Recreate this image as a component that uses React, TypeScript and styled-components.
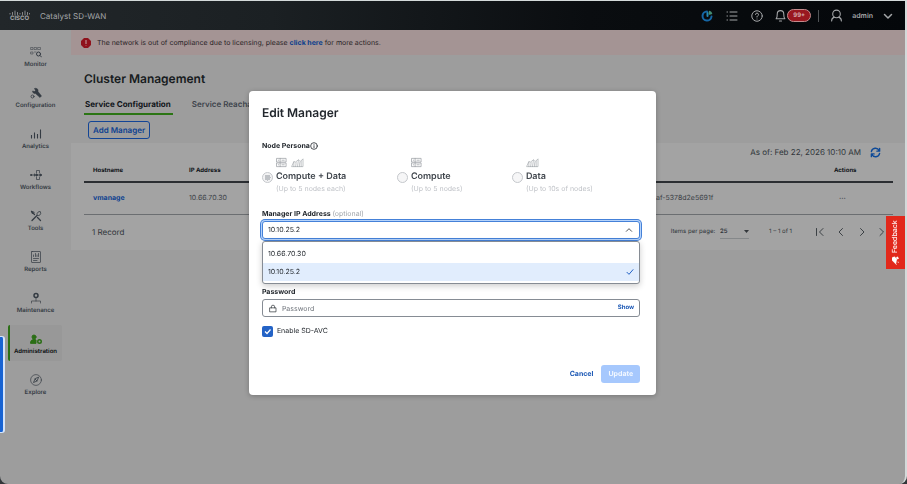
import React, { useState } from 'react';
import styled, { createGlobalStyle, css } from 'styled-components';

const GlobalStyle = createGlobalStyle`
  *, *::before, *::after { box-sizing: border-box; }
  html, body { margin: 0; height: 100%; background: #33373a; }
  body { font-family: Inter, "Liberation Sans", sans-serif; font-size: 7px; line-height: 12px; color: #23282e; text-rendering: geometricPrecision; }
  button, input, select { font: inherit; color: inherit; margin: 0; text-rendering: inherit; }
  button { cursor: pointer; }
`;

const Page = styled.div`
  min-height: 100vh;
  display: flex;
  flex-direction: column;
  background: #9d9d9d;
  border: solid #d4dada;
  border-width: 1px 2px 0 0;
  border-radius: 0 0 8px 8px;
  overflow: hidden;
`;

const TopBar = styled.header`
  height: 29px;
  flex: none;
  display: flex;
  align-items: center;
  justify-content: space-between;
  padding: 0 11px 0 9px;
  background: linear-gradient(90deg, #22272a 0%, #1b2023 30%, #0a0d10 65%, #04070a 100%);
  color: #a4a6a8;
`;

const Brand = styled.div`
  display: flex;
  align-items: center;
  gap: 10px;
  font-size: 8px;
`;

const Logo = styled.div`
  display: flex;
  flex-direction: column;
  align-items: center;
  width: 21px;
  font-size: 6px;
  line-height: 6px;
  font-weight: 700;
`;

const TopActions = styled.div`
  display: flex;
  align-items: center;
`;

const IconButton = styled.button<{ $width?: number }>`
  display: flex;
  align-items: center;
  justify-content: center;
  width: ${(p) => p.$width ?? 25}px;
  height: 20px;
  padding: 0;
  border: 0;
  background: none;
`;

const AlertButton = styled(IconButton)`
  width: 37px;
  margin-left: 5px;
`;

const CountBadge = styled.span`
  height: 13px;
  padding: 0 5px;
  border: 1px solid #c48b8d;
  border-radius: 7px;
  background: #991820;
  color: #d8b5b6;
  font-size: 6px;
  line-height: 11px;
  font-weight: 600;
`;

const Separator = styled.span`
  width: 1px;
  height: 12px;
  margin: 0 11px 0 7px;
  background: #505356;
`;

const UserButton = styled(IconButton)`
  width: auto;
  gap: 9px;
  font-weight: 600;
`;

const Body = styled.div`
  flex: 1;
  display: flex;
`;

const SideNav = styled.nav`
  flex: none;
  width: 71px;
  padding: 8px 9px 0 8px;
  display: flex;
  flex-direction: column;
  gap: 5px;
`;

const NavItem = styled.a<{ $active?: boolean }>`
  height: 36px;
  display: flex;
  flex-direction: column;
  align-items: center;
  gap: 2px;
  padding: 8px 1px 0 0;
  border-left: 2px solid transparent;
  border-radius: 2px;
  color: #343b43;
  font-size: 6px;
  line-height: 10px;
  font-weight: 600;
  text-decoration: none;
  ${(p) => p.$active && css`
    border-left-color: #2b6f16;
    background: #989898;
    color: #171b20;
    font-weight: 700;
    svg { color: #2b6f16; }
  `}
`;

const Main = styled.main`
  flex: 1;
  min-width: 0;
`;

const Banner = styled.div`
  height: 25px;
  display: flex;
  align-items: center;
  gap: 6px;
  padding-left: 10px;
  background: #a49494;
  color: #2b2527;
`;

const BannerLink = styled.a`
  color: #0c3f8c;
  font-weight: 700;
  text-decoration: none;
`;

const PageTitle = styled.h1`
  margin: 16px 0 0 13px;
  font-size: 12px;
  line-height: 16px;
  font-weight: 600;
  color: #171b20;
`;

const Tabs = styled.div`
  display: flex;
  gap: 18px;
  height: 21px;
  margin: 7px 0 0 13px;
`;

const Tab = styled.button<{ $active?: boolean }>`
  padding: 1px 2px 0 1px;
  border: 0;
  border-bottom: 2px solid ${(p) => (p.$active ? '#2b7514' : 'transparent')};
  background: none;
  font-size: 8px;
  font-weight: ${(p) => (p.$active ? 700 : 600)};
  color: ${(p) => (p.$active ? '#101419' : '#3d444c')};
`;

const AddButton = styled.button`
  display: block;
  height: 18px;
  margin: 6px 0 4px 17px;
  padding: 0 4px;
  border: 1px solid #134596;
  border-radius: 3px;
  background: none;
  color: #0e4190;
  font-size: 8px;
  font-weight: 600;
`;

const TablePanel = styled.section`
  padding: 0 12px 0 13px;
  background: #a3a3a3;
`;

const PanelHeader = styled.div`
  height: 18px;
  display: flex;
  align-items: center;
  justify-content: flex-end;
  gap: 8px;
  padding-right: 12px;
  font-size: 8px;
  color: #30353a;
`;

const NodeTable = styled.table`
  width: 100%;
  table-layout: fixed;
  border-collapse: collapse;
  text-align: left;
`;

const HeadCell = styled.th<{ $width?: number }>`
  width: ${(p) => (p.$width ? `${p.$width}px` : 'auto')};
  height: 21px;
  padding: 0 9px;
  border-bottom: 2px solid #2b2e32;
  font-size: 6px;
  font-weight: 700;
  color: #101419;
`;

const Cell = styled.td`
  height: 32px;
  padding: 0 9px;
  border-bottom: 1px solid #6b6e71;
  color: #3d4248;
`;

const HostLink = styled.a`
  color: #0e4190;
  font-weight: 700;
  text-decoration: none;
`;

const RowMenu = styled.button`
  padding: 0 5px;
  border: 0;
  background: none;
  font-size: 8px;
`;

const TableFooter = styled.div`
  height: 35px;
  display: flex;
  align-items: center;
  padding-left: 8px;
  color: #30353a;
`;

const RecordCount = styled.span`
  flex: 1;
  font-size: 8px;
`;

const PageSize = styled.label`
  display: flex;
  align-items: center;
  gap: 5px;
  font-size: 6px;
`;

const SizeSelectWrap = styled.span`
  display: flex;
  align-items: center;
  width: 29px;
  border-bottom: 1px solid #85888a;
`;

const SizeSelect = styled.select`
  flex: 1;
  min-width: 0;
  padding: 0;
  border: 0;
  appearance: none;
  background: none;
  font-weight: 600;
`;

const RangeText = styled.span`
  margin: 0 17px 0 20px;
  font-size: 6px;
`;

const FeedbackTab = styled.button`
  position: fixed;
  z-index: 3;
  right: 2px;
  top: 216px;
  width: 19px;
  height: 53px;
  display: flex;
  align-items: center;
  justify-content: center;
  gap: 3px;
  padding: 0;
  border: 0;
  writing-mode: vertical-rl;
  transform: rotate(180deg);
  background: #e2281b;
  color: #fff;
  font-size: 7px;
  font-weight: 500;
`;

const EdgeHandle = styled.span`
  position: fixed;
  z-index: 3;
  left: 0;
  top: 336px;
  width: 5px;
  height: 97px;
  border: solid #d5e4fa;
  border-width: 1px 2px 1px 0;
  border-radius: 0 3px 3px 0;
  background: #1763d3;
`;

const ModalLayer = styled.div`
  position: fixed;
  z-index: 2;
  inset: 2px 2px 0 0;
  display: flex;
  align-items: center;
  justify-content: center;
`;

const Dialog = styled.form`
  width: 45%;
  min-width: 407px;
  margin: 0;
  padding: 13px 16px 12px 13px;
  border-radius: 4px;
  background: #fff;
  box-shadow: 0 1px 5px rgba(0, 0, 0, 0.25);
`;

const DialogTitle = styled.h2`
  margin: 0;
  font-size: 12px;
  line-height: 18px;
  font-weight: 600;
`;

const FieldSet = styled.fieldset`
  margin: 18px 0 0;
  padding: 0;
  border: 0;
`;

const Legend = styled.legend`
  display: flex;
  align-items: center;
  padding: 0;
  font-weight: 700;
`;

const PersonaGrid = styled.div`
  display: grid;
  grid-template-columns: 135px 115px 1fr;
  padding-top: 4px;
`;

const PersonaOption = styled.label`
  display: grid;
  grid-template-columns: 10px 1fr;
  column-gap: 4px;
  align-items: center;
`;

const PersonaIcons = styled.span`
  grid-column: 2;
  display: flex;
  gap: 4px;
  height: 13px;
  align-items: center;
  color: #9a9ea3;
`;

const Radio = styled.input`
  appearance: none;
  width: 11px;
  height: 11px;
  border: 1px solid #c5c8cc;
  border-radius: 50%;
  background: #f6f6f7;
  &:checked { background: radial-gradient(circle, #bfc2c6 0 3px, #f3f3f4 3px); }
`;

const PersonaName = styled.span`
  line-height: 16px;
  font-size: 9px;
  font-weight: 600;
  color: #40464d;
`;

const PersonaHint = styled.span`
  grid-column: 2;
  line-height: 8px;
  color: #c0c3c8;
`;

const FieldLabel = styled.label`
  display: block;
  margin-top: 15px;
  font-weight: 700;
`;

const Optional = styled.span`
  font-weight: 400;
  color: #9fa4aa;
`;

const Combo = styled.div`
  position: relative;
  margin-top: 1px;
`;

const ComboBox = styled.div`
  display: flex;
  align-items: center;
  height: 18px;
  padding-right: 6px;
  border: 1px solid #4581d8;
  border-radius: 3px;
  background: #fff;
  box-shadow: 0 0 0 1px #b5d3fb, 0 0 0 2px #4581d8;
`;

const ComboSelect = styled.select`
  flex: 1;
  height: 16px;
  padding: 0 5px;
  border: 0;
  outline: 0;
  appearance: none;
  background: none;
`;

const Options = styled.ul`
  position: absolute;
  z-index: 1;
  top: 20px;
  left: 0;
  right: 0;
  margin: 0;
  padding: 3px 0 2px;
  border: 1px solid #868c94;
  border-radius: 3px;
  background: #fff;
  box-shadow: 0 2px 6px rgba(0, 0, 0, 0.2);
  list-style: none;
`;

const Option = styled.li<{ $selected?: boolean }>`
  display: flex;
  align-items: center;
  justify-content: space-between;
  height: 18px;
  padding: 0 5px;
  background: ${(p) => (p.$selected ? '#e1edfd' : 'transparent')};
`;

const PasswordLabel = styled(FieldLabel)`
  margin-top: 47px;
`;

const PasswordBox = styled.div`
  display: flex;
  align-items: center;
  gap: 5px;
  height: 18px;
  margin-top: 1px;
  padding: 0 5px 0 6px;
  border: 1px solid #868c94;
  border-radius: 3px;
`;

const PasswordInput = styled.input`
  flex: 1;
  min-width: 0;
  height: 16px;
  padding: 0;
  border: 0;
  outline: 0;
  background: none;
  &::placeholder { color: #71767d; opacity: 1; }
`;

const TextButton = styled.button`
  padding: 0;
  border: 0;
  background: none;
  color: #1c58b5;
  font-size: 6px;
  font-weight: 700;
`;

const CheckRow = styled.label`
  display: flex;
  align-items: center;
  gap: 4px;
  margin-top: 8px;
`;

const CheckBox = styled.input`
  appearance: none;
  width: 11px;
  height: 11px;
  border-radius: 2px;
  background: #2463c6;
`;

const CheckWrap = styled.span`
  position: relative;
  display: flex;
`;

const CheckMark = styled.svg`
  position: absolute;
  inset: 2px;
  pointer-events: none;
`;

const Buttons = styled.div`
  display: flex;
  justify-content: flex-end;
  align-items: center;
  gap: 8px;
  margin-top: 28px;
`;

const CancelButton = styled(TextButton)`
  font-size: 7px;
`;

const UpdateButton = styled.button`
  height: 18px;
  padding: 0 7px;
  border: 0;
  border-radius: 3px;
  background: #a6c8fd;
  color: #f3f8ff;
  font-weight: 700;
`;

type GlyphProps = { children: React.ReactNode; w?: number; h?: number; box?: string; sw?: number };
const Glyph = ({ children, w = 12, h = 12, box = '0 0 24 24', sw = 2 }: GlyphProps) => (
  <svg width={w} height={h} viewBox={box} fill="none" stroke="currentColor" strokeWidth={sw} strokeLinecap="round" strokeLinejoin="round" aria-hidden="true">
    {children}
  </svg>
);

const navItems: { label: string; icon: React.ReactNode }[] = [
  { label: 'Monitor', icon: <><path d="M2 3h4v4H2zM9 3h4v4H9zM16 3h5v4h-5zM2 12h4v4H2zM9 12h3" strokeWidth="1" /><circle cx="17" cy="16" r="4" /><path d="m20 19 3 3" /></> },
  { label: 'Configuration', icon: <><path d="M9 3a5 5 0 0 1 7 6l7 9-3 3-9-8a5 5 0 0 1-6-5l4 1 2-2z" fill="currentColor" strokeWidth="1" /><circle cx="5" cy="19" r="3" strokeWidth="1.6" /></> },
  { label: 'Analytics', icon: <path d="M3 21v-7M9 21V9M15 21V12M21 21V3" strokeWidth="2.2" strokeLinecap="butt" /> },
  { label: 'Workflows', icon: <><circle cx="2" cy="12" r="1" fill="currentColor" /><path d="M4 12h18M9 10v4" strokeWidth="1.6" /><path d="M13 8V3h6v5M13 16v5h6v-5" strokeWidth="1.4" /><circle cx="13" cy="12" r="1.6" fill="currentColor" /><circle cx="21" cy="12" r="1.6" fill="currentColor" /></> },
  { label: 'Tools', icon: <><path d="M4 21 14 11M3 3l6 6M15 15l6 6" strokeWidth="2.6" /><path d="M21 4a5 5 0 0 1-6 7M20 3a5 5 0 0 0-6 6M3 3l2 5 3-3z" strokeWidth="1.6" /></> },
  { label: 'Reports', icon: <><rect x="3" y="1" width="18" height="22" rx="1" strokeWidth="1.4" /><path d="M7 11V8M11 11V5M14 11V8M17 11V5M7 15h10M7 19h7" strokeWidth="1.4" /></> },
  { label: 'Maintenance', icon: <><circle cx="12" cy="7" r="4" strokeWidth="3" /><path d="M12 12v6M3 22v-4h18v4" strokeWidth="1.3" /></> },
  { label: 'Administration', icon: <><circle cx="8" cy="8" r="4" fill="currentColor" /><path d="M1 20c0-5 3-7 7-7 2 0 3 0 4 1v6z" fill="currentColor" /><circle cx="19" cy="17" r="3.5" strokeWidth="3" /></> },
  { label: 'Explore', icon: <><circle cx="12" cy="12" r="10.8" strokeWidth="1.3" /><path d="m17 7-3 7-7 3 3-7zM10 10l4 4" strokeWidth="1.6" /></> },
];

const ServerGlyph = () => (
  <Glyph w={11} h={11} sw={1.6}>
    <path d="M2 3h20v8H2zM2 13h20v8H2zM9 3v8M9 13v8M13 7h5M13 17h5M5 7h1M5 17h1" />
  </Glyph>
);
const ChartGlyph = () => (
  <Glyph w={13} h={11} box="0 0 28 24" sw={1.3}><path d="M2 21h24V4l-6 6-4-4-6 5-4-1-4 9zM6 21V11M10 21l1-9M14 21l2-14M18 21l1-9M22 21V9" /></Glyph>
);
const ArrowGlyph = ({ d }: { d: string }) => <Glyph w={12} h={12} sw={1.8}><path d={d} /></Glyph>;

const personas = [
  { name: 'Compute + Data', hint: '(Up to 5 nodes each)', icons: <><ServerGlyph /><ChartGlyph /></> },
  { name: 'Compute', hint: '(Up to 5 nodes)', icons: <ServerGlyph /> },
  { name: 'Data', hint: '(Up to 10s of nodes)', icons: <ChartGlyph /> },
];
const addresses = ['10.66.70.30', '10.10.25.2'];
const pagerButtons = [
  { label: 'First page', d: 'M5 5v14M18 5l-7 7 7 7' },
  { label: 'Previous page', d: 'm15 5-7 7 7 7' },
  { label: 'Next page', d: 'm9 5 7 7-7 7' },
  { label: 'Last page', d: 'M19 5v14M6 5l7 7-7 7' },
];

export default function App() {
  const [address, setAddress] = useState('10.10.25.2');
  const [open, setOpen] = useState(true);
  const [password, setPassword] = useState('');
  const [avc, setAvc] = useState(true);

  return (
    <>
      <GlobalStyle />
      <Page>
        <TopBar>
          <Brand>
            <Logo>
              <Glyph w={21} h={6} box="0 0 42 12" sw={1.6}>
                <path d="M2 7v1M7 5v4M12 2v8M17 5v4M22 7v1M27 5v4M32 2v8M37 5v4M41 7v1" />
              </Glyph>
              CISCO
            </Logo>
            Catalyst SD-WAN
          </Brand>
          <TopActions>
            <IconButton aria-label="Status">
              <Glyph w={12} h={12} sw={4}>
                <path d="M12 3a9 9 0 1 0 9 10" stroke="#1566a5" />
                <path d="M13 12V6" stroke="#2389b8" />
                <path d="M17 3a6 6 0 0 1 4 4l-4 1z" stroke="#438c72" strokeWidth="3" />
              </Glyph>
            </IconButton>
            <IconButton aria-label="Tasks"><Glyph><path d="M8 4h14M8 12h14M8 20h14M2 4h1M2 12h1M2 20h1" /></Glyph></IconButton>
            <IconButton aria-label="Help"><Glyph><circle cx="12" cy="12" r="10.5" /><path d="M9 9a3 3 0 1 1 4 3c-1 .5-1 1-1 2M12 18v.1" /></Glyph></IconButton>
            <AlertButton aria-label="Notifications, 99+">
              <Glyph w={13} h={13}><path d="M4 18c2-2 2-4 2-9a6 6 0 0 1 12 0c0 5 0 7 2 9zM10 22h4" /></Glyph>
              <CountBadge>99+</CountBadge>
            </AlertButton>
            <Separator />
            <UserButton>
              <Glyph w={13} h={13}><circle cx="12" cy="9" r="7" /><path d="M3 22c0-4 2-6 5-7M21 22c0-4-2-6-5-7" /></Glyph>
              admin
              <Glyph w={12} h={12} sw={3}><path d="m5 9 7 7 7-7" /></Glyph>
            </UserButton>
          </TopActions>
        </TopBar>
        <Body>
          <SideNav>
            {navItems.map((item) => (
              <NavItem key={item.label} href="#" $active={item.label === 'Administration'}>
                <Glyph>{item.icon}</Glyph>
                {item.label}
              </NavItem>
            ))}
          </SideNav>
          <Main>
            <Banner role="alert">
              <svg width="10" height="10" viewBox="0 0 20 20" aria-hidden="true">
                <path d="M6 0h8l6 6v8l-6 6H6l-6-6V6z" fill="#8f121c" />
                <path d="M10 4v8M10 15v1" stroke="#c4a5a6" strokeWidth="2" />
              </svg>
              <span>
                The network is out of compliance due to licensing, please <BannerLink href="#">click here</BannerLink> for more actions.
              </span>
            </Banner>
            <PageTitle>Cluster Management</PageTitle>
            <Tabs role="tablist">
              <Tab role="tab" aria-selected="true" $active>Service Configuration</Tab>
              <Tab role="tab" aria-selected="false">Service Reachability</Tab>
            </Tabs>
            <AddButton>Add Manager</AddButton>
            <TablePanel>
              <PanelHeader>
                As of: Feb 22, 2026 10:10 AM
                <IconButton $width={12} aria-label="Refresh">
                  <Glyph w={11} h={11} sw={3}>
                    <path d="M3 10a9 9 0 0 1 17-2M21 3v6h-6M21 14a9 9 0 0 1-17 2M3 21v-6h6" stroke="#0e4a98" />
                  </Glyph>
                </IconButton>
              </PanelHeader>
              <NodeTable>
                <thead>
                  <tr>
                    <HeadCell scope="col" $width={96}>Hostname</HeadCell>
                    <HeadCell scope="col">IP Address</HeadCell>
                    <HeadCell scope="col" $width={178} aria-label="UUID" />
                    <HeadCell scope="col" $width={68}>Actions</HeadCell>
                  </tr>
                </thead>
                <tbody>
                  <tr>
                    <Cell><HostLink href="#">vmanage</HostLink></Cell>
                    <Cell>10.66.70.30</Cell>
                    <Cell>af-5378d2e5691f</Cell>
                    <Cell><RowMenu aria-label="Row actions">···</RowMenu></Cell>
                  </tr>
                </tbody>
              </NodeTable>
              <TableFooter>
                <RecordCount>1 Record</RecordCount>
                <PageSize>
                  Items per page:
                  <SizeSelectWrap>
                    <SizeSelect defaultValue="25"><option>25</option><option>50</option></SizeSelect>
                    <svg width="5" height="3" viewBox="0 0 10 6" aria-hidden="true"><path d="M0 0h10L5 6z" fill="#33373b" /></svg>
                  </SizeSelectWrap>
                </PageSize>
                <RangeText>1 – 1 of 1</RangeText>
                {pagerButtons.map((b) => (
                  <IconButton key={b.label} $width={21} aria-label={b.label}><ArrowGlyph d={b.d} /></IconButton>
                ))}
              </TableFooter>
            </TablePanel>
          </Main>
        </Body>
      </Page>

      <EdgeHandle />
      <FeedbackTab>
        <svg width="9" height="9" viewBox="0 0 18 18" aria-hidden="true">
          <path d="M16 9 8 1 6 12l5 5 5-2zM5 11l-3 2 3 4 3-2z" fill="#fff" />
          <path d="M5 6 2 5M8 1 6 0" stroke="#fff" strokeWidth="1.4" />
        </svg>
        <span>Feedback</span>
      </FeedbackTab>

      <ModalLayer>
        <Dialog role="dialog" aria-labelledby="dialog-title" onSubmit={(e) => e.preventDefault()}>
          <DialogTitle id="dialog-title">Edit Manager</DialogTitle>
          <FieldSet disabled>
            <Legend>
              Node Persona
              <Glyph w={8} h={8} sw={2.4}><circle cx="12" cy="12" r="10" /><path d="M12 11v6M12 7v.1" /></Glyph>
            </Legend>
            <PersonaGrid>
              {personas.map((p, i) => (
                <PersonaOption key={p.name}>
                  <PersonaIcons>{p.icons}</PersonaIcons>
                  <Radio type="radio" name="persona" defaultChecked={i === 0} />
                  <PersonaName>{p.name}</PersonaName>
                  <PersonaHint>{p.hint}</PersonaHint>
                </PersonaOption>
              ))}
            </PersonaGrid>
          </FieldSet>
          <FieldLabel htmlFor="manager-ip">Manager IP Address <Optional>(optional)</Optional></FieldLabel>
          <Combo>
            <ComboBox>
              <ComboSelect
                id="manager-ip"
                value={address}
                onChange={(e) => setAddress(e.target.value)}
                onMouseDown={(e) => { e.preventDefault(); setOpen(!open); }}
              >
                {addresses.map((a) => <option key={a}>{a}</option>)}
              </ComboSelect>
              <Glyph w={8} h={8} sw={2.4}><path d="m4 16 8-8 8 8" /></Glyph>
            </ComboBox>
            {open && (
              <Options role="listbox" aria-label="Manager IP Address">
                {addresses.map((a) => (
                  <Option key={a} role="option" aria-selected={a === address} $selected={a === address} onClick={() => { setAddress(a); setOpen(false); }}>
                    {a}
                    {a === address && <Glyph w={8} h={8} sw={3}><path d="m3 13 6 6L21 5" stroke="#2463c6" /></Glyph>}
                  </Option>
                ))}
              </Options>
            )}
          </Combo>
          <PasswordLabel htmlFor="password">Password</PasswordLabel>
          <PasswordBox>
            <Glyph w={8} h={9} sw={2}><path d="M3 10h18v12H3zM7 10V7a5 5 0 0 1 10 0v3" /></Glyph>
            <PasswordInput id="password" type="password" placeholder="Password" value={password} onChange={(e) => setPassword(e.target.value)} />
            <TextButton type="button">Show</TextButton>
          </PasswordBox>
          <CheckRow>
            <CheckWrap>
              <CheckBox type="checkbox" checked={avc} onChange={(e) => setAvc(e.target.checked)} />
              {avc && <CheckMark width="7" height="7" viewBox="0 0 14 14" fill="none" stroke="#fff" strokeWidth="2.4"><path d="m2 7 4 4 7-8" /></CheckMark>}
            </CheckWrap>
            Enable SD-AVC
          </CheckRow>
          <Buttons>
            <CancelButton type="button">Cancel</CancelButton>
            <UpdateButton type="submit">Update</UpdateButton>
          </Buttons>
        </Dialog>
      </ModalLayer>
    </>
  );
}
